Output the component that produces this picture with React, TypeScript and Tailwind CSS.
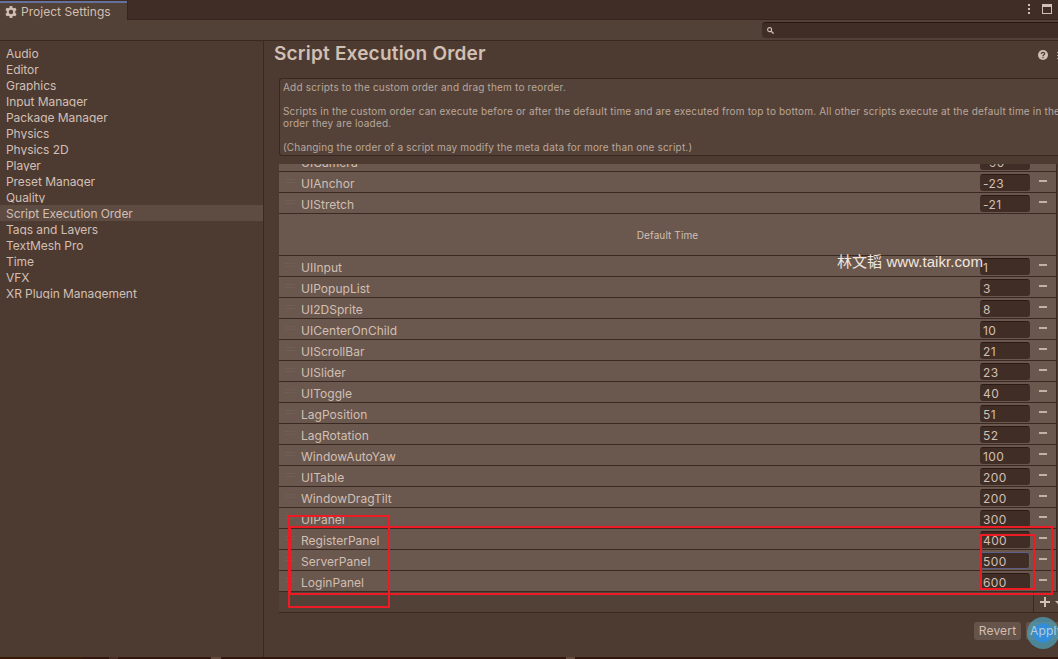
import React from "react";

const categories = [
  "Audio", "Editor", "Graphics", "Input Manager", "Package Manager", "Physics", "Physics 2D", "Player",
  "Preset Manager", "Quality", "Script Execution Order", "Tags and Layers", "TextMesh Pro", "Time", "VFX",
  "XR Plugin Management",
];

const before: [string, string][] = [["UIAnchor", "-23"], ["UIStretch", "-21"]];

const after: [string, string][] = [
  ["UIInput", "1"], ["UIPopupList", "3"], ["UI2DSprite", "8"], ["UICenterOnChild", "10"], ["UIScrollBar", "21"],
  ["UISlider", "23"], ["UIToggle", "40"], ["LagPosition", "51"], ["LagRotation", "52"], ["WindowAutoYaw", "100"],
  ["UITable", "200"], ["WindowDragTilt", "200"], ["UIPanel", "300"], ["RegisterPanel", "400"],
  ["ServerPanel", "500"], ["LoginPanel", "600"],
];

function Row({ name, value }: { name: string; value: string }) {
  const active = name === "ServerPanel";
  return (
    <div className="flex h-[21px] shrink-0 border-t border-[#3a2920] bg-[#6a584e]">
      <div className="ml-[6px] mt-[7px] h-[4px] w-[10px] border-y border-[#705e54]" />
      <div className="ml-[6px] flex-1 pt-[4px] text-[12px] leading-[16px] tracking-[0.03px]">{name}</div>
      <div
        className={
          "mt-[2px] h-[17px] w-[50px] rounded-[3px] border pl-[2px] pt-[2px] text-[12px] leading-[14px] tracking-[0.4px] " +
          (active ? "border-[#5c5f88] bg-[#402e26]" : "border-[#402e26] border-t-[#2b1b14] bg-[#402e26]")
        }
      >
        {value}
      </div>
      <div className="ml-[9px] mr-[9px] mt-[8px] h-[2px] w-[8px] bg-[#c4b1a5]" />
    </div>
  );
}

export default function App() {
  return (
    <div className="relative flex h-[659px] w-[1058px] flex-col overflow-hidden bg-[#4d3b32] font-['Inter',sans-serif] text-[#d2bfb3]">
      <header className="flex h-[20px] shrink-0 bg-[#402d25]">
        <div className="mt-px flex h-[19px] w-[127px] items-center border-t-2 border-[#65719b] bg-[#524137] pl-[5px]">
          <svg width="12" height="12" viewBox="0 0 24 24" fill="#d2bfb3">
            <path fillRule="evenodd" d="M9.5 0h5l.7 3.500 2.100 1.200 3.400-1.200 2.500 4.300-2.700 2.300v3.800l2.700 2.300-2.500 4.300-3.400-1.200-2.100 1.200-.7 3.500h-5l-.7-3.500-2.100-1.200-3.400 1.200-2.500-4.300 2.700-2.300v-3.800L.8 7.800l2.500-4.300 3.400 1.200 2.100-1.200zM12 7.500a4.500 4.500 0 100 9 4.500 4.500 0 000-9z" />
          </svg>
          <span className="ml-[4px] text-[12px] leading-[16px] tracking-[0.03px]">Project Settings</span>
        </div>
        <div className="flex flex-1 justify-end border-b border-l border-[#36251e]">
          <div className="mr-[12px] mt-[4px] flex flex-col gap-[2px]">
            <i className="size-[2px] bg-[#d2bfb3]" />
            <i className="size-[2px] bg-[#d2bfb3]" />
            <i className="size-[2px] bg-[#d2bfb3]" />
          </div>
          <div className="mr-[6px] mt-[4px] h-[10px] w-[10px] border border-t-[3px] border-[#d2bfb3]" />
        </div>
      </header>

      <div className="flex h-[21px] shrink-0 justify-end border-b border-[#392820] bg-[#524137]">
        <div className="mt-[2px] flex h-[16px] w-[296px] items-center rounded-l-[4px] border-t border-[#281811] bg-[#402e26] pl-[5px]">
          <svg width="7" height="7" viewBox="0 0 8 8" fill="none" stroke="#d2bfb3">
            <circle cx="3" cy="3" r="2.300" strokeWidth="1.200" />
            <path d="M4.700 4.700L7.500 7.500" strokeWidth="1.500" />
          </svg>
        </div>
      </div>

      <div className="flex min-h-0 flex-1">
        <nav className="w-[264px] shrink-0 border-r border-[#3a2920] pt-[4px]">
          {categories.map((c) => (
            <div key={c} className={"h-[16px] pl-[6px] " + (c === "Script Execution Order" ? "bg-[#5e4c42]" : "")}>
              <div className="h-[14px] overflow-hidden text-[12px] leading-[17px] tracking-[-0.06px]">{c}</div>
            </div>
          ))}
        </nav>

        <main className="flex min-w-0 flex-1 flex-col overflow-hidden">
          <div className="flex h-[37px] shrink-0 items-start justify-between pl-[10px]">
            <h1 className="text-[19px] font-semibold leading-[25px] tracking-[0.2px]">Script Execution Order</h1>
            <div className="mt-[9px] flex">
              <svg width="10" height="10" viewBox="0 0 10 10">
                <circle cx="5" cy="5" r="5" fill="#d2bfb3" />
                <path d="M3.300 3.900C3.300 1.700 6.800 1.800 6.700 3.800 6.600 4.900 5 4.800 5 6.200M5 7.100v1.200" fill="none" stroke="#4d3b32" strokeWidth="1.200" />
              </svg>
              <div className="ml-[9px] mt-[2px] flex flex-col gap-[2px]">
                <i className="h-[1px] w-px bg-[#b9a79b]" />
                <i className="h-[1px] w-px bg-[#b9a79b]" />
                <i className="h-[1px] w-px bg-[#b9a79b]" />
              </div>
            </div>
          </div>

          <section className="ml-[15px] h-[78px] shrink-0 whitespace-nowrap rounded-l-[3px] border border-r-0 border-[#392820] bg-[#544238] pl-[3px] pt-[2px] text-[10px] leading-[12px] tracking-[0.18px] text-[#baa79b]">
            <p>Add scripts to the custom order and drag them to reorder.</p>
            <p className="mt-[12px]">Scripts in the custom order can execute before or after the default time and are executed from top to bottom. All other scripts execute at the default time in the</p>
            <p>order they are loaded.</p>
            <p className="mt-[12px]">(Changing the order of a script may modify the meta data for more than one script.)</p>
          </section>

          <section className="ml-[15px] mr-[1px] mt-[8px] flex shrink-0 flex-col border-r border-[#3a2920]">
            <div className="flex h-[7px] flex-col justify-end overflow-hidden bg-[#6a584e]">
              <Row name="UICamera" value="-90" />
            </div>
            {before.map(([n, v]) => <Row key={n} name={n} value={v} />)}
            <div className="flex h-[42px] items-center justify-center border-t border-[#3a2920] bg-[#6a584e] pt-[2px] text-[10px] tracking-[0.1px]">
              Default Time
            </div>
            {after.map(([n, v]) => <Row key={n} name={n} value={v} />)}
          </section>
          <div className="ml-[15px] flex h-[22px] shrink-0 justify-end border-y border-[#3a2920] bg-[#524137]">
            <div className="flex w-[25px] items-center border-l border-[#3a2920] pl-[6px]">
              <svg width="18" height="10" viewBox="0 0 18 10" fill="#d2bfb3">
                <path d="M4 0h2v4h4v2H6v4H4V6H0V4h4zM15 4h6l-3 3z" />
              </svg>
            </div>
          </div>
          <div className="mt-[9px] flex shrink-0 justify-end gap-[5px] text-[12px] leading-[17px] tracking-[0.2px]">
            <div className="h-[18px] w-[47px] rounded-[3px] bg-[#66544a] text-center">Revert</div>
            <div className="h-[18px] w-[32px] rounded-l-[3px] bg-[#66544a] pl-[4px]">
              <span className="relative z-10 text-[#b5cfdc]">Apply</span>
            </div>
          </div>
        </main>
      </div>

      <footer className="flex h-[2px] shrink-0 bg-[#35160f]">
        <div className="h-full w-[82px] bg-[#3a1a06]" />
        <div className="ml-[27px] h-full w-[9px] bg-[#4c2c22]" />
        <div className="ml-[93px] h-full w-[10px] bg-[#65473c]" />
        <div className="ml-[345px] h-full w-[9px] bg-[#65473c]" />
      </footer>

      <div className="absolute left-[837px] top-[252px] whitespace-nowrap font-['Liberation_Sans','Noto_Sans_CJK_SC',sans-serif] text-[15px] leading-[20px] tracking-[0.06px] text-[#f3e6df]">
        林文韬 www.taikr.com
      </div>
      <div className="absolute left-[288px] top-[515px] h-[93px] w-[102px] border-2 border-[#ed1c24]" />
      <div className="absolute left-[289px] top-[526px] h-[69px] w-[764px] border-2 border-[#ed1c24]" />
      <div className="absolute left-[980px] top-[534px] h-[56px] w-[55px] border-2 border-[#ed1c24]" />
      <div className="absolute left-[1027px] top-[617px] flex size-[32px] items-center justify-center rounded-full bg-[#4f99ad]/80">
        <div className="size-[20px] rounded-full bg-[#2d8de8]/80" />
      </div>
    </div>
  );
}
